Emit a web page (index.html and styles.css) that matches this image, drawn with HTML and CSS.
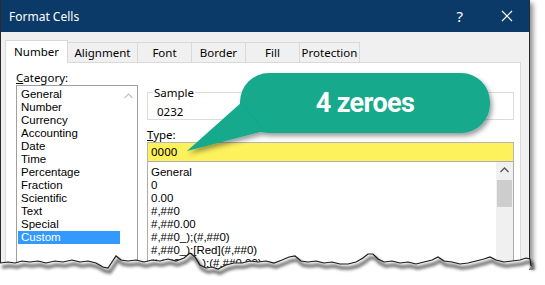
FILE: index.html
```html
<!DOCTYPE html>
<html lang="en">

<head>
    <meta charset="UTF-8">
    <meta name="viewport" content="width=device-width, initial-scale=1.0">
    <title>Format Cells</title>
    <link rel="stylesheet" href="styles.css">
</head>

<body>
    <div class="window">
        <div class="titlebar">
            <span class="title">Format Cells</span>
            <span class="help">?</span>
            <svg class="close" width="12" height="12" viewBox="0 0 12 12">
                <path d="M1 1 L11 11 M11 1 L1 11" stroke="#fff" stroke-width="1.2" fill="none" />
            </svg>
        </div>

        <div class="dialog">
            <ul class="tabs">
                <li class="tab select w-number">Number</li>
                <li class="tab w-align">Alignment</li>
                <li class="tab w-font">Font</li>
                <li class="tab w-border">Border</li>
                <li class="tab w-fill">Fill</li>
                <li class="tab w-protect">Protection</li>
            </ul>

            <div class="panel">
                <div class="category-col">
                    <div class="label"><u>C</u>ategory:</div>
                    <div class="listbox">
                        <ul class="items">
                            <li>General</li>
                            <li>Number</li>
                            <li>Currency</li>
                            <li>Accounting</li>
                            <li>Date</li>
                            <li>Time</li>
                            <li>Percentage</li>
                            <li>Fraction</li>
                            <li>Scientific</li>
                            <li>Text</li>
                            <li>Special</li>
                            <li class="select">Custom</li>
                        </ul>
                        <div class="scroll">
                            <svg width="9" height="6" viewBox="0 0 9 6">
                                <polyline points="0.5,5 4.5,1 8.5,5" stroke="#c4c4c4" stroke-width="1.2" fill="none" />
                            </svg>
                        </div>
                    </div>
                </div>

                <div class="format-col">
                    <fieldset class="sample">
                        <legend>Sample</legend>
                        <div class="sample-value">0232</div>
                    </fieldset>

                    <div class="label type-label"><u>T</u>ype:</div>
                    <div class="type-input">0000</div>

                    <div class="formats">
                        <ul class="items">
                            <li>General</li>
                            <li>0</li>
                            <li>0.00</li>
                            <li>#,##0</li>
                            <li>#,##0.00</li>
                            <li>#,##0_);(#,##0)</li>
                            <li>#,##0_);[Red](#,##0)</li>
                            <li>#,##0.00_);(#,##0.00)</li>
                        </ul>
                        <div class="vscroll">
                            <svg class="arrow" width="9" height="6" viewBox="0 0 9 6">
                                <polyline points="0.5,5 4.5,1 8.5,5" stroke="#555" stroke-width="1.3" fill="none" />
                            </svg>
                            <div class="thumb"></div>
                        </div>
                    </div>
                </div>
            </div>
        </div>
    </div>

    <!-- callout bubble -->
    <div class="callout">
        <svg width="330" height="100" viewBox="0 0 330 100">
            <defs>
                <filter id="bubbleShadow" x="-10%" y="-20%" width="130%" height="160%">
                    <feDropShadow dx="2" dy="3" stdDeviation="2.5" flood-color="#000" flood-opacity="0.4" />
                </filter>
            </defs>
            <g filter="url(#bubbleShadow)" fill="#12a98b">
                <rect x="60" y="5" width="250" height="60" rx="29" ry="29" />
                <polygon points="62,34 7,83 84,63" />
            </g>
        </svg>
        <span class="callout-text">4 zeroes</span>
    </div>

    <!-- torn paper edge -->
    <svg class="torn" width="545" height="40" viewBox="0 0 545 40">
        <defs>
            <filter id="blur" x="-5%" y="-50%" width="110%" height="200%">
                <feGaussianBlur stdDeviation="1.8" />
            </filter>
        </defs>
        <path fill="#fff" d="M-5 15 L0 15 L8 14 L15 15 L22 13 L30 14 L38 13 L46 15 L55 13 L63 14 L72 12 L80 14 L88 13 L96 15 L103 19 L108 20 L112 14 L116 8 L121 12 L128 13 L136 12 L144 14 L152 12 L160 13 L168 11 L176 13 L184 10 L190 5 L195 9 L200 17 L206 20 L212 19 L218 21 L226 17 L234 15 L242 15 L250 13 L258 14 L266 13 L274 15 L282 12 L289 9 L295 8 L301 13 L308 14 L316 13 L324 15 L332 14 L340 16 L348 16 L356 14 L363 10 L368 6 L373 6 L378 11 L384 14 L392 13 L400 15 L408 14 L416 16 L424 14 L432 12 L438 9 L444 13 L452 14 L460 16 L468 15 L476 13 L484 11 L490 9 L496 12 L504 14 L512 13 L520 12 L526 10 L530 11 L531 18 L529 22 L545 22 L545 45 L-5 45 Z" />
        <path fill="none" stroke="#000" stroke-opacity="0.55" stroke-width="3.5" filter="url(#blur)" transform="translate(2 4)" d="M0 15 L8 14 L15 15 L22 13 L30 14 L38 13 L46 15 L55 13 L63 14 L72 12 L80 14 L88 13 L96 15 L103 19 L108 20 L112 14 L116 8 L121 12 L128 13 L136 12 L144 14 L152 12 L160 13 L168 11 L176 13 L184 10 L190 5 L195 9 L200 17 L206 20 L212 19 L218 21 L226 17 L234 15 L242 15 L250 13 L258 14 L266 13 L274 15 L282 12 L289 9 L295 8 L301 13 L308 14 L316 13 L324 15 L332 14 L340 16 L348 16 L356 14 L363 10 L368 6 L373 6 L378 11 L384 14 L392 13 L400 15 L408 14 L416 16 L424 14 L432 12 L438 9 L444 13 L452 14 L460 16 L468 15 L476 13 L484 11 L490 9 L496 12 L504 14 L512 13 L520 12 L526 10 L530 11 L531 18" />
        <path fill="none" stroke="#1a1a1a" stroke-width="1.2" d="M0 15 L8 14 L15 15 L22 13 L30 14 L38 13 L46 15 L55 13 L63 14 L72 12 L80 14 L88 13 L96 15 L103 19 L108 20 L112 14 L116 8 L121 12 L128 13 L136 12 L144 14 L152 12 L160 13 L168 11 L176 13 L184 10 L190 5 L195 9 L200 17 L206 20 L212 19 L218 21 L226 17 L234 15 L242 15 L250 13 L258 14 L266 13 L274 15 L282 12 L289 9 L295 8 L301 13 L308 14 L316 13 L324 15 L332 14 L340 16 L348 16 L356 14 L363 10 L368 6 L373 6 L378 11 L384 14 L392 13 L400 15 L408 14 L416 16 L424 14 L432 12 L438 9 L444 13 L452 14 L460 16 L468 15 L476 13 L484 11 L490 9 L496 12 L504 14 L512 13 L520 12 L526 10 L530 11 L531 18" />
    </svg>
</body>

</html>
```

FILE: styles.css
```css
body {
    margin: 0;
    width: 545px;
    height: 285px;
    overflow: hidden;
    position: relative;
    background: #fff;
    font-family: "Noto Sans", "Open Sans", sans-serif;
    font-size: 11.5px;
    color: #000;
}

.window {
    box-sizing: border-box;
    width: 530px;
    height: 285px;
    background: #f0f0f0;
    border: 1px solid #2a2a2a;
    border-top: none;
    box-shadow: 3px 3px 5px rgba(0, 0, 0, 0.45);
}

/* title bar */
.titlebar {
    height: 32px;
    background: #0b3a68;
    color: #fff;
    display: flex;
    align-items: center;
    padding-left: 8px;
    font-size: 12px;
}

.titlebar .title {
    flex: 1;
}

.titlebar .help {
    font-size: 15px;
    margin-right: 38px;
}

.titlebar .close {
    margin-right: 16px;
}

.dialog {
    padding: 8px 8px 0 4px;
}

/* tabs */
.tabs {
    list-style: none;
    margin: 0;
    padding: 0;
    height: 22px;
    display: flex;
    align-items: flex-start;
}

.tab {
    box-sizing: border-box;
    height: 20px;
    margin-top: 2px;
    margin-left: -1px;
    border: 1px solid #d9d9d9;
    border-bottom: none;
    background: #f0f0f0;
    display: flex;
    align-items: center;
    justify-content: center;
    line-height: 15px;
}

.tab.select {
    margin-left: 0;
    margin-top: 0;
    height: 23px;
    background: #fff;
    position: relative;
    z-index: 1;
    padding-bottom: 2px;
}

.w-number { width: 63px; }
.w-align { width: 71px; }
.w-font { width: 55px; }
.w-border { width: 55px; }
.w-fill { width: 55px; }
.w-protect { width: 61px; }

/* panel */
.panel {
    box-sizing: border-box;
    height: 230px;
    background: #fff;
    border: 1px solid #d9d9d9;
    display: flex;
    gap: 9px;
    padding: 7px 6px 0 10px;
}

.label {
    line-height: 15px;
    height: 15px;
}

.category-col {
    width: 122px;
}

.listbox {
    box-sizing: border-box;
    height: 190px;
    border: 1px solid #a0a0a0;
    display: flex;
}

.items {
    list-style: none;
    margin: 0;
    padding: 2px 0 0 1px;
    flex: 1;
    font-family: "Liberation Sans", Arial, sans-serif;
    font-size: 11.5px;
}

.items li {
    height: 13px;
    line-height: 13px;
    padding-left: 3px;
    white-space: nowrap;
}

.items li.select {
    background: #3399ff;
    color: #fff;
}

.scroll {
    width: 17px;
    display: flex;
    justify-content: center;
    padding-top: 7px;
}

/* right side */
.format-col {
    width: 367px;
    padding-top: 15px;
}

.sample {
    margin: 0;
    padding: 4px 5px 2px;
    border: 1px solid #dcdcdc;
    height: 27px;
    box-sizing: content-box;
}

.sample legend {
    padding: 0 1px;
    line-height: 15px;
}

.sample-value {
    line-height: 15px;
    padding-left: 4px;
}

.type-label {
    margin-top: 7px;
}

.type-input {
    box-sizing: border-box;
    height: 20px;
    line-height: 18px;
    background: #fdf15c;
    border: 1px solid #b5b5b5;
    padding-left: 3px;
}

.formats {
    box-sizing: border-box;
    height: 120px;
    margin-top: -1px;
    border: 1px solid #acacac;
    display: flex;
}

.formats .items {
    padding-top: 4px;
}

.formats .items li {
    padding-left: 2px;
}

.vscroll {
    width: 17px;
    background: #f0f0f0;
    display: flex;
    flex-direction: column;
    align-items: center;
    padding-top: 5px;
}

.vscroll .thumb {
    margin-top: 7px;
    width: 15px;
    height: 27px;
    background: #cdcdcd;
}

/* callout */
.callout {
    position: absolute;
    left: 180px;
    top: 68px;
    width: 330px;
    height: 100px;
}

.callout svg {
    display: block;
}

.callout-text {
    position: absolute;
    left: 60px;
    top: 5px;
    width: 250px;
    height: 60px;
    display: flex;
    align-items: center;
    justify-content: center;
    font-family: Roboto, "Noto Sans", sans-serif;
    font-weight: bold;
    font-size: 27px;
    letter-spacing: -0.6px;
    color: #fff;
}

/* torn edge */
.torn {
    position: absolute;
    left: 0;
    top: 248px;
}
```
